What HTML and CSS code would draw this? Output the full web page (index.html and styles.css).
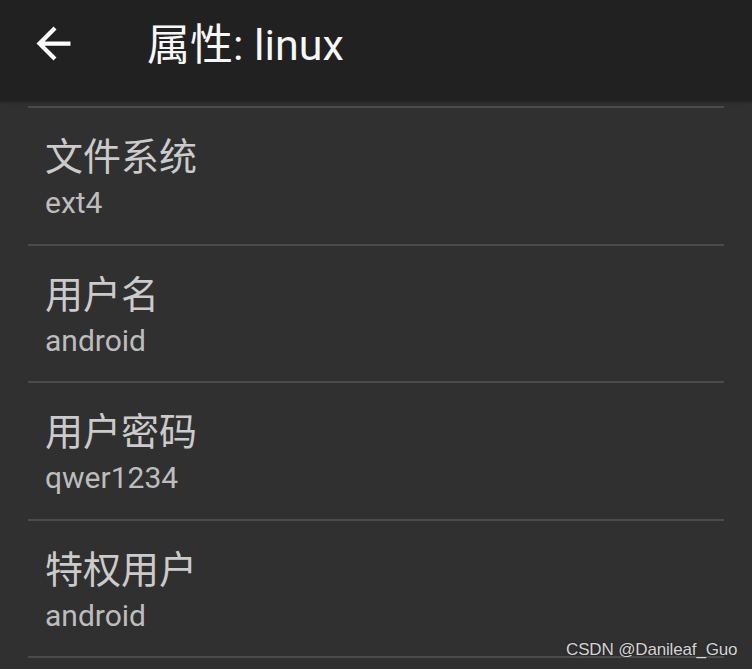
FILE: index.html
```html
<!DOCTYPE html>
<html lang="zh">
<head>
<meta charset="utf-8">
<title>属性: linux</title>
<link rel="stylesheet" href="styles.css">
</head>
<body>
<div class="screen">
  <header class="appbar">
    <button class="back" aria-label="返回">
      <svg viewBox="0 0 24 24" width="51" height="51"><path fill="#ffffff" d="M20 11H7.83l5.59-5.59L12 4l-8 8 8 8 1.41-1.41L7.83 13H20v-2z"/></svg>
    </button>
    <h1 class="title">属性: linux</h1>
  </header>
  <ul class="props">
    <li class="prop"><div class="name">文件系统</div><div class="value">ext4</div></li>
    <li class="prop"><div class="name">用户名</div><div class="value">android</div></li>
    <li class="prop"><div class="name">用户密码</div><div class="value">qwer1234</div></li>
    <li class="prop"><div class="name">特权用户</div><div class="value">android</div></li>
    <li class="prop"><div class="name">&nbsp;</div><div class="value">&nbsp;</div></li>
  </ul>
  <div class="watermark">CSDN @Danileaf_Guo</div>
</div>
</body>
</html>
```
FILE: styles.css
```css
html, body {
  margin: 0;
  padding: 0;
  background: #303030;
}
.screen {
  position: relative;
  width: 752px;
  height: 669px;
  overflow: hidden;
  background: #303030;
  font-family: Roboto, "Noto Sans CJK SC", sans-serif;
}
.appbar {
  height: 101px;
  background: #212121;
  display: flex;
  align-items: flex-start;
  box-shadow: 0 1px 3px rgba(0,0,0,0.35);
}
.back {
  margin: 18px 0 0 28px;
  padding: 0;
  border: 0;
  background: none;
  width: 51px;
  height: 51px;
  display: block;
}
.back svg { display: block; }
.title {
  margin: 17px 0 0 68px;
  font-size: 43px;
  line-height: 56px;
  font-weight: 400;
  color: #f7f7f7;
  font-family: Roboto, "Noto Sans CJK SC", sans-serif;
}
.props {
  list-style: none;
  margin: 5px 28px 0;
  padding: 0;
}
.prop {
  border-top: 2px solid #4b4b4b;
  padding: 24px 0 22.5px 17px;
}
.name {
  font-family: "Noto Sans CJK SC", sans-serif;
  font-size: 38px;
  line-height: 44px;
  color: #cbcbcb;
}
.value {
  margin-top: 9px;
  font-family: Roboto, sans-serif;
  font-size: 30px;
  line-height: 36px;
  color: #bdbdbd;
}
.watermark {
  position: absolute;
  left: 566px;
  top: 640px;
  font-family: "Liberation Sans", Arial, sans-serif;
  font-size: 17px;
  letter-spacing: -0.15px;
  line-height: 20px;
  color: #d4d4d4;
  text-shadow: 0 0 2px rgba(0,0,0,0.5);
}
```
